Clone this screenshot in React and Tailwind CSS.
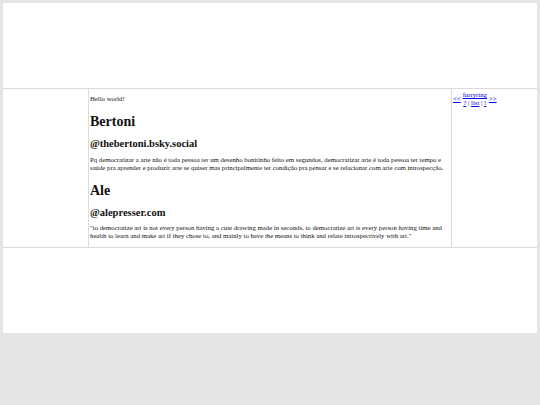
import React from "react";

export default function App() {
  return (
    <div className="min-h-screen bg-[#e5e5e5] p-[3px] font-[family-name:'Liberation_Serif',serif] text-[6.75px] leading-[8px] text-[#111]">
      <div className="grid grid-cols-[85px_1fr_85px] gap-px bg-[#dcdcdc]">
        <div className="col-span-3 h-[85px] bg-white" />

        <div className="bg-white" />

        <div className="bg-white px-px pt-[6px] pb-[7px]">
          <p>Hello world!</p>
          <h1 className="mt-[11px] mb-[8px] text-[14px] leading-[1.15] font-bold">Bertoni</h1>
          <h2 className="mt-[8px] mb-[6px] text-[10.5px] leading-[1.15] font-bold">@thebertoni.bsky.social</h2>
          <p>
            Pq democratizar a arte não é toda pessoa ter um desenho bonitinho feito em segundos, democratizar arte é toda pessoa ter tempo e saúde pra aprender e produzir arte se quiser mas principalmente ter condição pra pensar e se relacionar com arte com introspecção.
          </p>
          <h1 className="mt-[11px] mb-[8px] text-[14px] leading-[1.15] font-bold">Ale</h1>
          <h2 className="mt-[8px] mb-[5px] text-[10.5px] leading-[1.15] font-bold">@alepresser.com</h2>
          <p>
            "to democratize art is not every person having a cute drawing made in seconds, to democratize art is every person having time and health to learn and make art if they chose to, and mainly to have the means to think and relate introspectively with art."
          </p>
        </div>

        <div className="bg-white pl-px pt-[2px]">
          <div className="flex items-center gap-[2px] text-[#0000ee]">
            <a href="#" className="underline">&lt;&lt;</a>
            <div className="flex flex-col items-center">
              <a href="#" className="underline">furryring</a>
              <span>
                <a href="#" className="underline">?</a> | <a href="#" className="underline">list</a> | <a href="#" className="underline">!</a>
              </span>
            </div>
            <a href="#" className="underline">&gt;&gt;</a>
          </div>
        </div>

        <div className="col-span-3 h-[85px] bg-white" />
      </div>
    </div>
  );
}
